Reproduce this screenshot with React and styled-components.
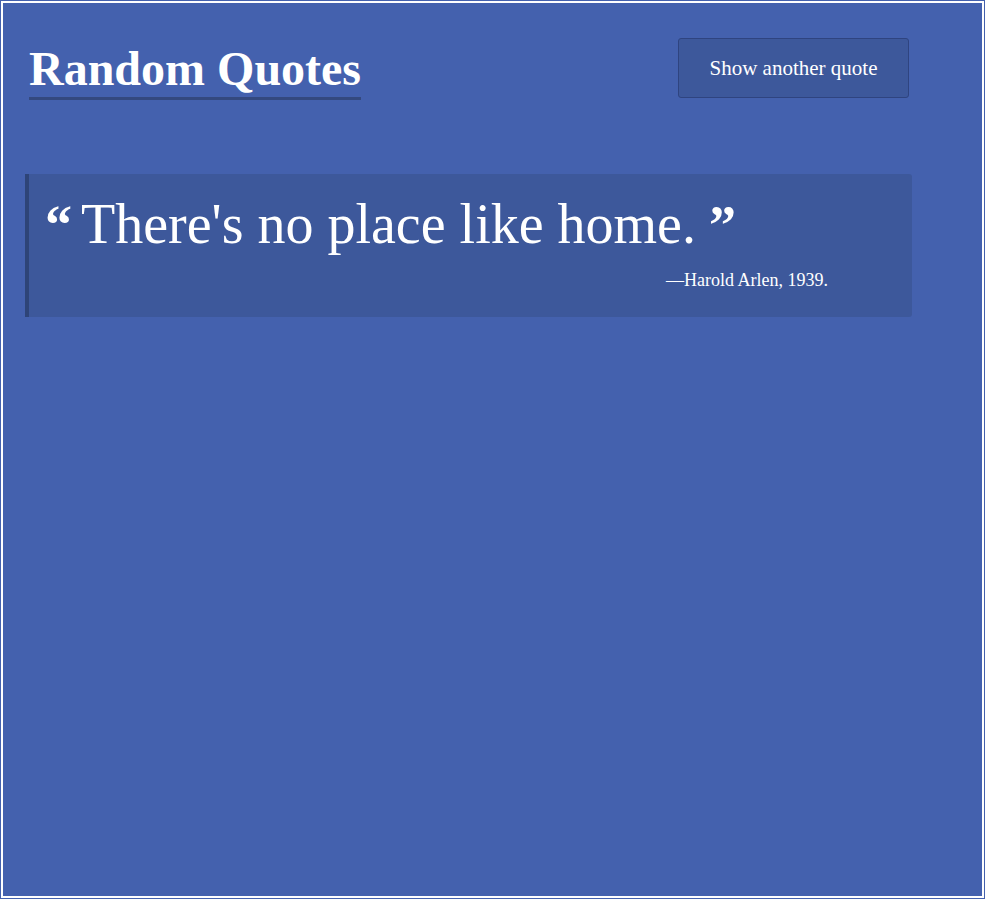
import styled, { createGlobalStyle } from "styled-components";

const GlobalStyle = createGlobalStyle`
  html {
    background: #4461ae;
  }
  body {
    margin: 1px;
    border: 2px solid #fff;
    height: 893px;
    box-sizing: content-box;
    background: #4461ae;
    color: #fff;
    font-family: "Liberation Serif", "DejaVu Serif", serif;
  }
`;

const Main = styled.main`
  padding: 35px 70px 0 22px;
`;

const Header = styled.header`
  display: flex;
  justify-content: space-between;
  align-items: flex-start;
  padding: 0 3px 0 4px;
`;

const Title = styled.h1`
  margin: 3px 0 0;
  font-size: 48px;
  line-height: 56px;
  font-weight: 700;
  border-bottom: 3px solid #34497f;
`;

const Button = styled.button`
  width: 231px;
  height: 60px;
  background: #3d589b;
  border: 1px solid #2f4480;
  border-radius: 3px;
  color: #fff;
  font-family: "Liberation Serif", "DejaVu Serif", serif;
  font-size: 21px;
  cursor: pointer;
`;

const Card = styled.blockquote`
  margin: 74px 0 0;
  padding: 17px 84px 25px 16px;
  background: #3d589b;
  border-left: 4px solid #2e4478;
  border-radius: 0 3px 3px 0;
`;

const QuoteText = styled.p`
  margin: 0;
  font-size: 56px;
  line-height: 1.2;
`;

const Mark = styled.span`
  font-size: 54px;
  font-weight: 700;
  margin: ${(p) => (p.$close ? "0 0 0 13px" : "0 9px 0 0")};
`;

const Cite = styled.footer`
  margin-top: 12px;
  font-size: 18px;
  line-height: 1.2;
  text-align: right;
`;

export default function App() {
  return (
    <>
      <GlobalStyle />
      <Main>
        <Header>
          <Title>Random Quotes</Title>
          <Button>Show another quote</Button>
        </Header>
        <Card>
          <QuoteText>
            <Mark>“</Mark>There's no place like home.<Mark $close>”</Mark>
          </QuoteText>
          <Cite>—Harold Arlen, 1939.</Cite>
        </Card>
      </Main>
    </>
  );
}
